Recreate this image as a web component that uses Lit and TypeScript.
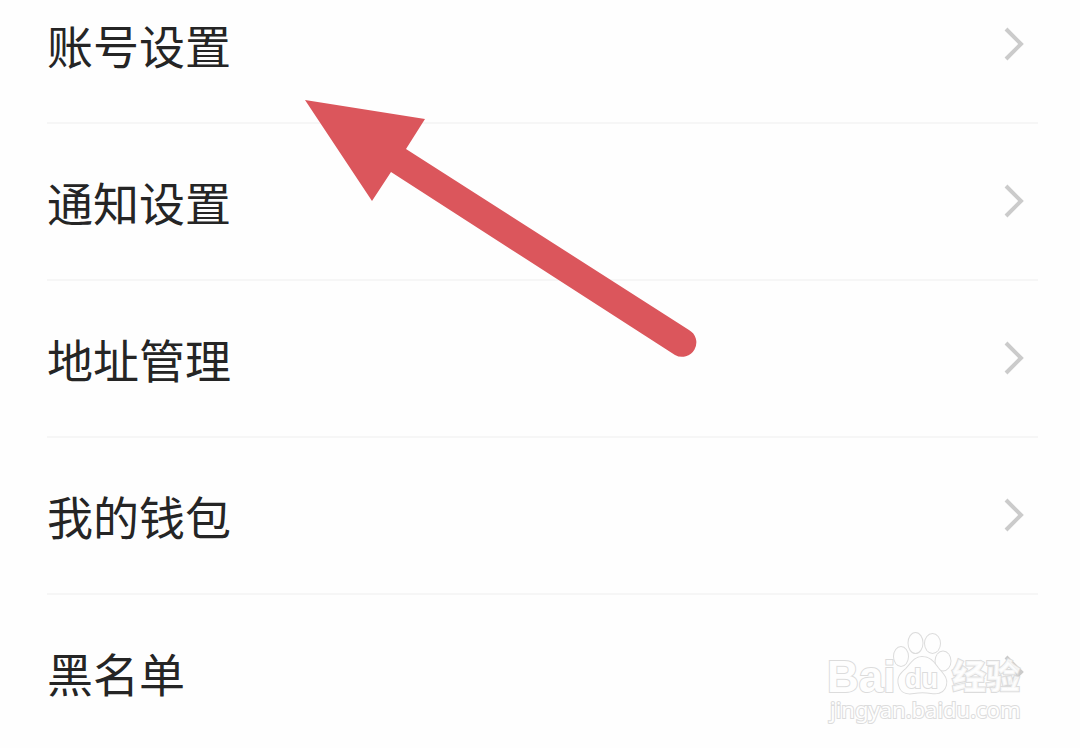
import { LitElement, html, css } from "lit";
import { customElement } from "lit/decorators.js";

@customElement("app-root")
export class AppRoot extends LitElement {
  static styles = css`
    :host {
      display: block;
      position: relative;
      height: 100vh;
      overflow: hidden;
      background: #fefefe;
      color: #252525;
      font-family: "Noto Sans CJK SC", sans-serif;
    }
    /* The list is scrolled part of the way into its first row. */
    .list {
      list-style: none;
      margin: -33px 0 0;
      padding: 0 42px 0 47px;
    }
    .row {
      display: flex;
      align-items: center;
      justify-content: space-between;
      box-sizing: border-box;
      height: 157px;
      padding: 0 12px 2px 0;
      border-bottom: 2px solid #f6f6f6;
      color: inherit;
      font-size: 46px;
      line-height: 68px;
      text-decoration: none;
    }
    .item:last-child .row {
      border-bottom-color: transparent;
    }
    .chevron {
      width: 24px;
      height: 36px;
      fill: none;
      stroke: #cbcbcb;
      stroke-width: 4;
    }
    .arrow {
      position: absolute;
      left: 300px;
      top: 94px;
      width: 400px;
      height: 268px;
      fill: #db565c;
      pointer-events: none;
    }
    .mark {
      position: absolute;
      right: 50px;
      bottom: 16px;
      width: 210px;
      height: 108px;
      fill: #fefefe;
      stroke: #dcdcdc;
      stroke-width: 2;
      paint-order: stroke;
      pointer-events: none;
    }
    .brand {
      font: bold 44px "Liberation Sans", sans-serif;
    }
    .du {
      font: bold 27px "Liberation Sans", sans-serif;
    }
    .topic {
      font: 900 34px "Noto Sans CJK SC", sans-serif;
      fill: rgba(254, 254, 254, 0.8);
    }
    .site {
      font: 22px "Noto Sans", sans-serif;
    }
  `;

  private items = ["账号设置", "通知设置", "地址管理", "我的钱包", "黑名单"];

  render() {
    return html`
      <ul class="list">
        ${this.items.map(
          (label) => html`<li class="item">
            <a class="row" href="#">
              <span>${label}</span>
              <svg class="chevron" viewBox="0 0 24 36" aria-hidden="true">
                <path d="M4 3 19 18 4 33" />
              </svg>
            </a>
          </li>`
        )}
      </ul>
      <svg class="arrow" viewBox="300 94 400 268" aria-hidden="true">
        <path d="M305 100 425 119 406 149 689 330A14 14 0 0 1 675 355L391 172 372 201Z" />
      </svg>
      <svg class="mark" viewBox="820 624 210 108">
        <text class="brand" x="827" y="692">Bai</text>
        <ellipse cx="901" cy="656.500" rx="7" ry="9.500" />
        <ellipse cx="915.500" cy="643" rx="7" ry="10" />
        <ellipse cx="932.500" cy="643.500" rx="7.500" ry="9.500" />
        <ellipse cx="943" cy="661" rx="7.500" ry="9.500" />
        <path d="M922 657C914 657 911 664 906 669C900 674 897 678 899 685C901 694 908 694 914 693C920 692 925 692 931 693C937 694 944 693 946 685C948 678 942 673 938 668C934 663 931 657 922 657Z" />
        <text class="du" x="905" y="688">du</text>
        <text class="topic" x="952" y="689">经验</text>
        <text class="site" x="830" y="718">jingyan.baidu.com</text>
      </svg>
    `;
  }
}
